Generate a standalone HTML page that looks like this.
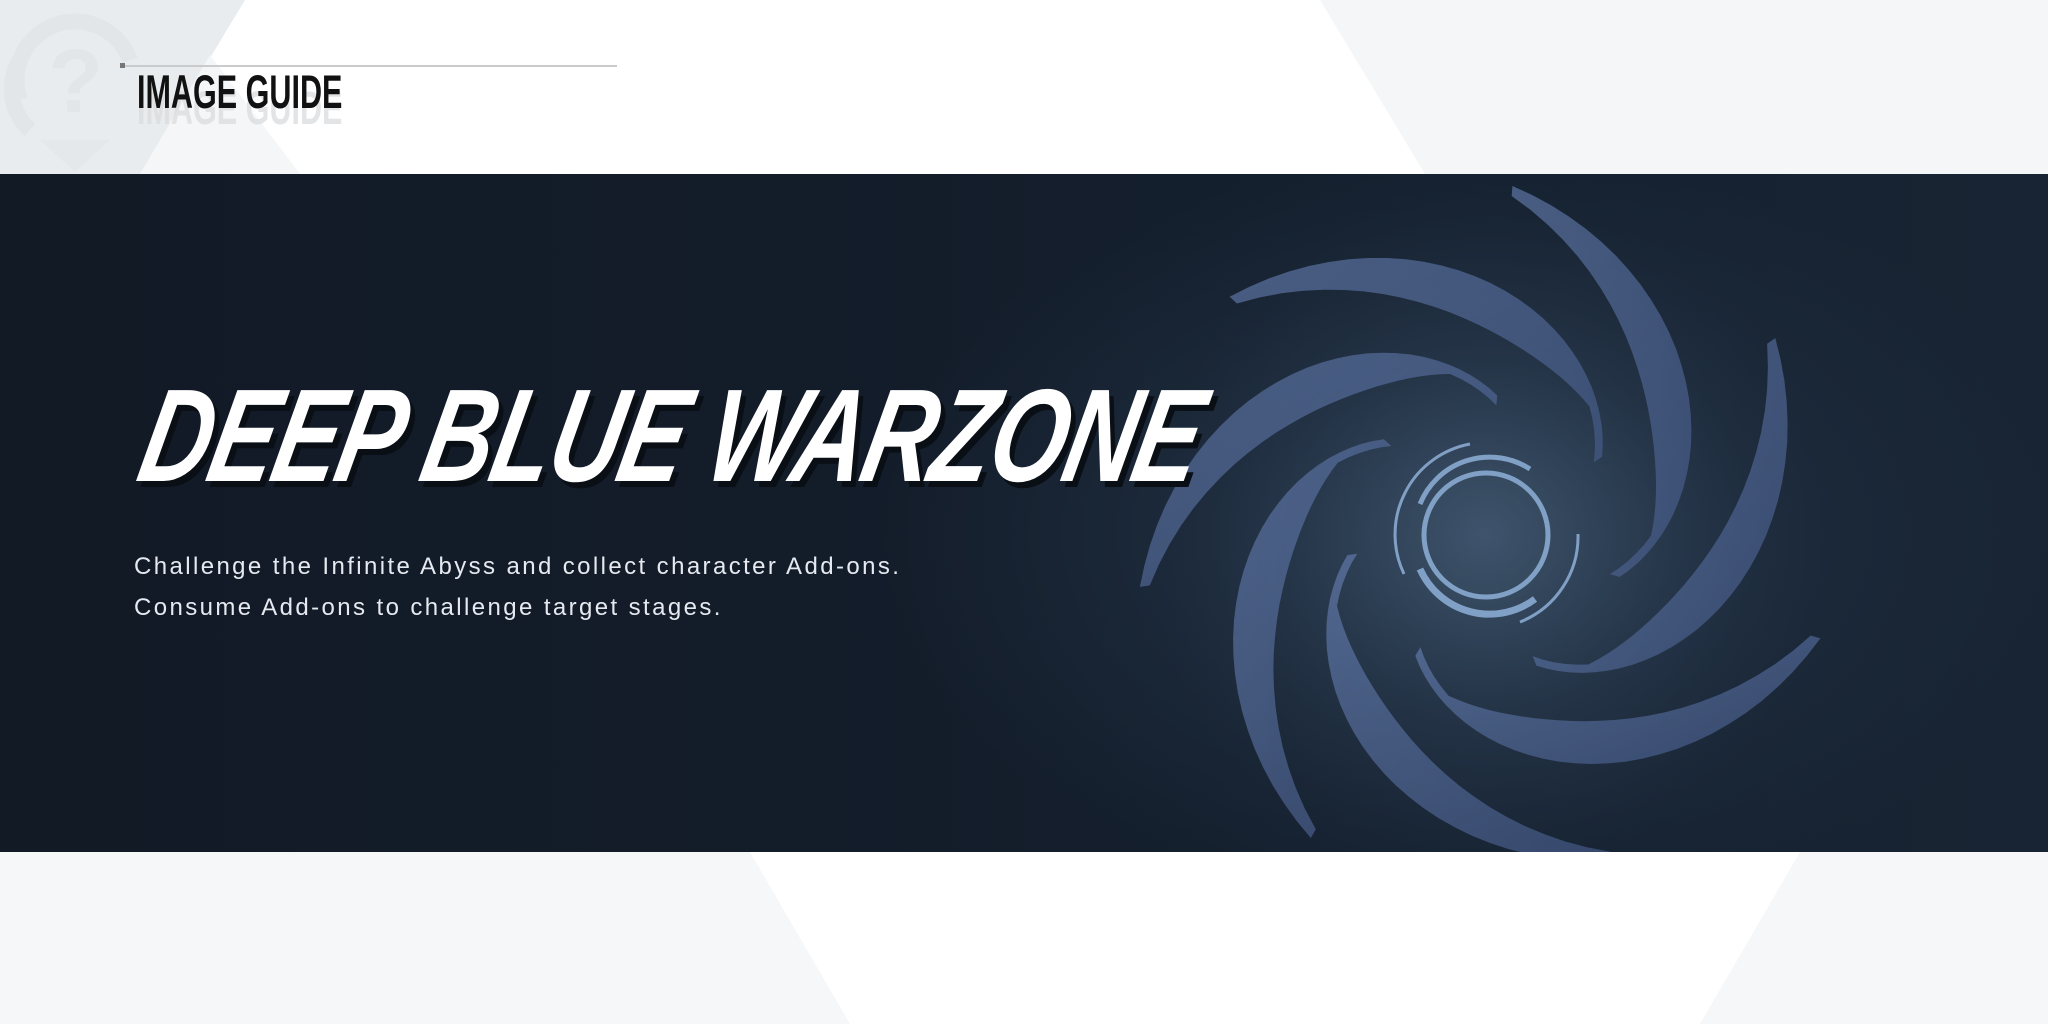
<!DOCTYPE html>
<html><head><meta charset="utf-8"><style>
html,body{margin:0;padding:0;width:2048px;height:1024px;overflow:hidden;background:#fff;font-family:"Liberation Sans",sans-serif}
.bgsvg{position:absolute;left:0;top:0}
.banner{position:absolute;left:0;top:174px;width:2048px;height:678px;overflow:hidden;
background:radial-gradient(ellipse 600px 380px at 1480px 360px,#2a3a4e 0%,#1c2a3b 45%,rgba(20,28,40,0) 100%),linear-gradient(90deg,#121a26 0%,#131c29 40%,#152130 70%,#182433 100%)}
.title{position:absolute;left:160px;top:186px;font-family:"Liberation Sans",sans-serif;font-weight:bold;font-style:italic;font-size:132px;color:#fff;letter-spacing:-2px;transform:skewX(-12deg) scaleX(0.74);transform-origin:left top;text-shadow:8px 6px 0 #0a0f16;white-space:nowrap}
.desc{position:absolute;left:134px;top:372px;color:#e6eaf0;font-size:24px;line-height:41px;letter-spacing:2.4px}
.ig{position:absolute;left:137px;top:64px;font-size:47px;font-weight:bold;color:#111;transform:scaleX(0.65);transform-origin:left top}
.igs{position:absolute;left:137px;top:80px;font-size:47px;font-weight:bold;color:#d8dadc;transform:scaleX(0.65);transform-origin:left top;opacity:.7}
.line{position:absolute;left:122px;top:65px;width:495px;height:2px;background:#c9cbcc}
.dot{position:absolute;left:120px;top:63px;width:5px;height:5px;background:#777}
</style></head><body>
<svg class="bgsvg" width="2048" height="1024">
<polygon points="0,0 245,0 140,174 0,174" fill="#e9ecee"/>
<polygon points="140,174 210,55 300,174" fill="#f4f6f7"/>
<polygon points="1320,0 2048,0 2048,174 1425,174" fill="#f4f6f8"/>
<polygon points="0,852 750,852 850,1024 0,1024" fill="#f5f7f8"/>
<polygon points="1800,852 2048,852 2048,1024 1700,1024" fill="#f5f7f8"/>
<g fill="none" stroke="#e3e6e8" stroke-width="16">
<path d="M20,100 A55,55 0 0 1 130,60"/><path d="M20,60 A55,55 0 0 0 30,130"/>
</g>
<text x="48" y="112" font-size="90" font-weight="bold" fill="#e3e6e8" font-family="Liberation Sans">?</text>
<polygon points="40,140 110,140 75,172" fill="#e5e8ea"/>
</svg>
<div class="line"></div><div class="dot"></div>
<div class="igs">IMAGE GUIDE</div>
<div class="ig">IMAGE GUIDE</div>
<div class="banner">
<svg width="2048" height="678" style="position:absolute;left:0;top:0">
<defs>
<radialGradient id="gl" cx="0.5" cy="0.5" r="0.5"><stop offset="0" stop-color="#4f6a85" stop-opacity=".55"/><stop offset="1" stop-color="#2a3a50" stop-opacity="0"/></radialGradient>
<linearGradient id="bl" x1="0" y1="0" x2="1" y2="1"><stop offset="0" stop-color="#6b84b8"/><stop offset="1" stop-color="#4a5f90"/></linearGradient>
</defs>
<circle cx="1486" cy="361" r="340" fill="url(#gl)"/>
<g id="sw" fill="url(#bl)" opacity=".6"></g>
<g fill="none" stroke="#8fb0d8" stroke-width="5" opacity=".85">
<circle cx="1486" cy="361" r="62"/>
<path d="M1420,330 A75,75 0 0 1 1530,295"/>
<path d="M1420,395 A76,76 0 0 0 1535,425" stroke-width="7"/>
<path d="M1404,400 A92,92 0 0 1 1470,270" stroke-width="3"/>
<path d="M1520,448 A92,92 0 0 0 1578,360" stroke-width="3"/>
</g>
</svg>
<div class="title">DEEP BLUE WARZONE</div>
<div class="desc">Challenge the Infinite Abyss and collect character Add-ons.<br>Consume Add-ons to challenge target stages.</div>
</div>
<script>
(function(){
var g=document.getElementById('sw'),cx=1486,cy=361,n=7;
for(var k=0;k<n;k++){
 var a0=k*2*Math.PI/n+0.3, pts=[],inner=[];
 var N=30;
 for(var i=0;i<=N;i++){
  var t=i/N, ang=a0+t*1.8, r=350-210*t, w=10+38*Math.sin(Math.PI*Math.min(1,t*1.2));
  pts.push([cx+r*Math.cos(ang),cy+r*Math.sin(ang)]);
  inner.push([cx+(r-w)*Math.cos(ang),cy+(r-w)*Math.sin(ang)]);
 }
 var d='M'+pts.map(function(p){return p[0].toFixed(1)+','+p[1].toFixed(1)}).join(' L');
 d+=' L'+inner.reverse().map(function(p){return p[0].toFixed(1)+','+p[1].toFixed(1)}).join(' L')+'Z';
 var p=document.createElementNS('http://www.w3.org/2000/svg','path');
 p.setAttribute('d',d);g.appendChild(p);
}
})();
</script>
</body></html>
